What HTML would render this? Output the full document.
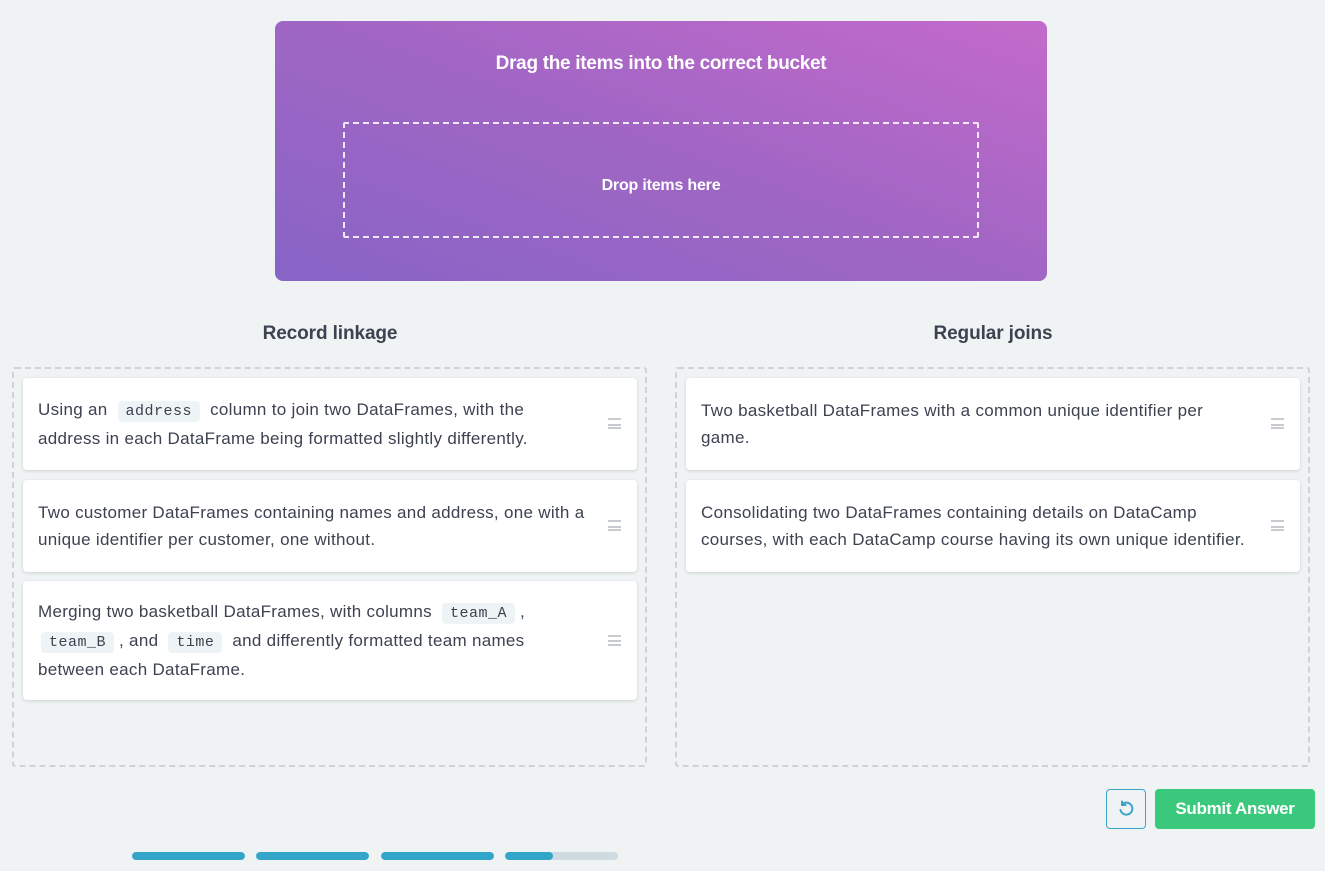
<!DOCTYPE html>
<html><head><meta charset="utf-8"><style>
*{box-sizing:border-box;margin:0;padding:0}
body{width:1325px;height:871px;background:#eff3f4;font-family:"Liberation Sans",sans-serif;position:relative;overflow:hidden;color:#3d4251}
.abs{position:absolute}
.hero{left:275px;top:21px;width:772px;height:260px;border-radius:8px;background:linear-gradient(20deg,#8764c6 0%,#a066c4 50%,#c36acb 100%)}
.hero h1{position:absolute;top:32px;width:100%;text-align:center;color:#fff;font-size:19px;font-weight:bold;letter-spacing:-0.3px}
.drop{position:absolute;left:68px;top:101px;width:636px;height:116px;border:2px dashed rgba(255,255,255,.85);border-radius:2px;color:#fff;font-weight:bold;font-size:16px;display:flex;align-items:center;justify-content:center;letter-spacing:-0.2px;padding-top:12px}
.h2{font-size:19px;font-weight:bold;text-align:center;width:634px;top:323px;color:#3d4251;letter-spacing:-0.1px}
.col{top:367px;width:635px;height:400px;border:2px dashed #cdd3d8;border-radius:3px}
.card{position:absolute;left:9px;width:614px;background:#fff;border-radius:4px;box-shadow:0 1px 3px rgba(0,0,0,.15);padding:0 30px 0 15px;font-size:17px;line-height:27px;display:flex;align-items:center;letter-spacing:0.3px;color:#3d4251;white-space:nowrap}
.card .h{position:absolute;right:16px;top:50%;margin-top:-6px;width:13px;height:11px;border-top:2px solid #c8ccd0;border-bottom:2px solid #c8ccd0}
.card .h:after{content:"";position:absolute;left:0;right:0;top:3.5px;border-top:2px solid #c8ccd0}
code{font-family:"Liberation Mono",monospace;background:#eef3f5;border-radius:4px;padding:2px 8px;font-size:15px;letter-spacing:0.5px;margin:0 5px;color:#3d4251}
.bar{top:852px;width:113px;height:8px;border-radius:4px;background:#cfdbe1;overflow:hidden}
.bar i{display:block;height:100%;background:#33a5c9;border-radius:4px}
</style></head><body>
<div class="abs hero"><h1>Drag the items into the correct bucket</h1><div class="drop">Drop items here</div></div>
<div class="abs h2" style="left:13px">Record linkage</div>
<div class="abs h2" style="left:676px">Regular joins</div>
<div class="abs col" style="left:12px">
 <div class="card" style="top:9px;height:92px"><div>Using an <code>address</code> column to join two DataFrames, with the<br>address in each DataFrame being formatted slightly differently.</div><span class="h"></span></div>
 <div class="card" style="top:111px;height:92px"><div>Two customer DataFrames containing names and address, one with a<br>unique identifier per customer, one without.</div><span class="h"></span></div>
 <div class="card" style="top:212px;height:119px"><div>Merging two basketball DataFrames, with columns <code>team_A</code>,<br><code style="margin-left:3px">team_B</code>, and <code>time</code> and differently formatted team names<br>between each DataFrame.</div><span class="h"></span></div>
</div>
<div class="abs col" style="left:675px">
 <div class="card" style="top:9px;height:92px"><div>Two basketball DataFrames with a common unique identifier per<br>game.</div><span class="h"></span></div>
 <div class="card" style="top:111px;height:92px"><div>Consolidating two DataFrames containing details on DataCamp<br>courses, with each DataCamp course having its own unique identifier.</div><span class="h"></span></div>
</div>
<div class="abs" style="left:1106px;top:789px;width:40px;height:40px;border:1px solid #3aa5c9;border-radius:4px;display:flex;align-items:center;justify-content:center">
<svg width="18" height="18" viewBox="0 0 18 18" fill="none" stroke="#3aa5c9" stroke-width="2" stroke-linecap="round"><path d="M5 4.5A6 6 0 1 1 3.5 10"/><path d="M5 1.5v3.5h3.5"/></svg></div>
<div class="abs" style="left:1155px;top:789px;width:160px;height:40px;background:#3ac87d;border-radius:4px;color:#fff;font-weight:bold;font-size:17px;display:flex;align-items:center;justify-content:center;letter-spacing:-0.3px">Submit Answer</div>
<div class="abs bar" style="left:132px"><i style="width:100%"></i></div>
<div class="abs bar" style="left:256px"><i style="width:100%"></i></div>
<div class="abs bar" style="left:381px"><i style="width:100%"></i></div>
<div class="abs bar" style="left:505px"><i style="width:48px"></i></div>
</body></html>
